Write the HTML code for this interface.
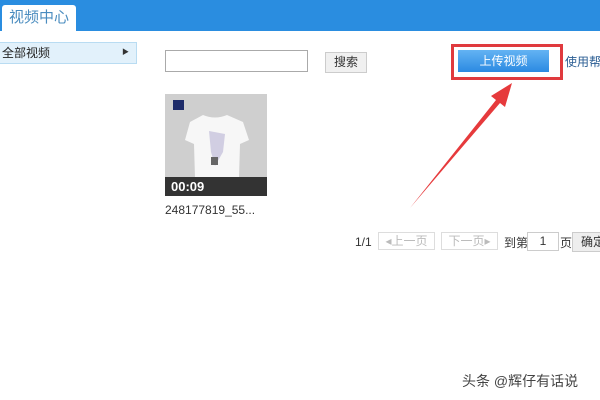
<!DOCTYPE html>
<html><head><meta charset="utf-8"><style>
body{margin:0;width:600px;height:400px;position:relative;background:#fff;font-family:"Liberation Sans","Noto Sans CJK SC",sans-serif;font-size:12px;overflow:hidden}
.a{position:absolute}
</style></head><body>
<div class="a" style="left:0;top:0;width:600px;height:31px;background:#2a8de0"></div>
<div class="a" style="left:2px;top:5px;width:74px;height:26px;background:#fff;border-radius:3px 3px 0 0;color:#4a8cbf;font-size:15px;line-height:26px;text-align:center">视频中心</div>
<div class="a" style="left:0;top:42px;background:#e2f1fb;border:1px solid #b9dcf2;border-left:none;line-height:20px;font-size:12px;color:#222;padding-left:2px;box-sizing:border-box;width:137px;height:22px">全部视频<span class="a" style="left:122px;top:0;font-size:7px;color:#333">▶</span></div>
<div class="a" style="left:165px;top:50px;border:1px solid #aaa;box-sizing:border-box;width:143px;height:22px"></div>
<div class="a" style="left:325px;top:52px;width:42px;height:21px;background:#f0f0f0;border:1px solid #ccc;box-sizing:border-box;text-align:center;line-height:19px;color:#333">搜索</div>
<div class="a" style="left:451px;top:44px;width:112px;height:36px;border:3px solid #e03a3e;box-sizing:border-box"></div>
<div class="a" style="left:458px;top:50px;width:91px;height:22px;background:linear-gradient(#63b3f3,#2b8ae2);color:#fff;text-align:center;line-height:22px;font-size:12px">上传视频</div>
<div class="a" style="left:565px;top:53px;color:#2a5d93;font-size:12px;white-space:nowrap">使用帮助</div>
<div class="a" style="left:165px;top:94px;width:102px;height:102px;background:#cfcfcf;overflow:hidden">
<div class="a" style="left:8px;top:6px;width:11px;height:10px;background:#1e2c6a"></div>
<svg class="a" style="left:0;top:0" width="102" height="102"><path d="M38 21 Q50 26 62 21 L78 28 L84 46 L75 50 L74 84 L30 84 L29 50 L20 46 L25 28 Z" fill="#f7f7f7"/><path d="M44 37 L60 40 L58 58 L50 72 L46 58 Z" fill="#b7b3d3" opacity=".6"/><rect x="46" y="63" width="7" height="8" fill="#666"/></svg>
<div class="a" style="left:0;top:83px;width:102px;height:19px;background:#333;color:#fff;font-weight:bold;font-size:13px;line-height:19px;padding-left:6px;box-sizing:border-box">00:09</div>
</div>
<div class="a" style="left:165px;top:203px;font-size:12px;color:#333">248177819_55...</div>
<div class="a" style="left:355px;top:235px;color:#333">1/1</div>
<div class="a" style="left:378px;top:232px;width:57px;height:18px;border:1px solid #ddd;box-sizing:border-box;color:#bbb;line-height:16px;text-align:center">◂上一页</div>
<div class="a" style="left:441px;top:232px;width:57px;height:18px;border:1px solid #ddd;box-sizing:border-box;color:#bbb;line-height:16px;text-align:center">下一页▸</div>
<div class="a" style="left:504px;top:234px;color:#333">到第</div>
<div class="a" style="left:527px;top:232px;width:32px;height:19px;border:1px solid #ccc;box-sizing:border-box;text-align:center;line-height:17px;color:#333">1</div>
<div class="a" style="left:560px;top:234px;color:#333">页</div>
<div class="a" style="left:572px;top:232px;width:40px;height:20px;background:#eee;border:1px solid #ccc;box-sizing:border-box;line-height:18px;padding-left:8px;color:#333">确定</div>
<svg class="a" style="left:0;top:0" width="600" height="400"><path d="M410 208 L496 100 L491 96 L512 83 L505 107 L500 103 Z" fill="#e63a3c"/></svg>
<div class="a" style="left:462px;top:371px;color:#444;font-size:14px">头条 @辉仔有话说</div>
</body></html>
